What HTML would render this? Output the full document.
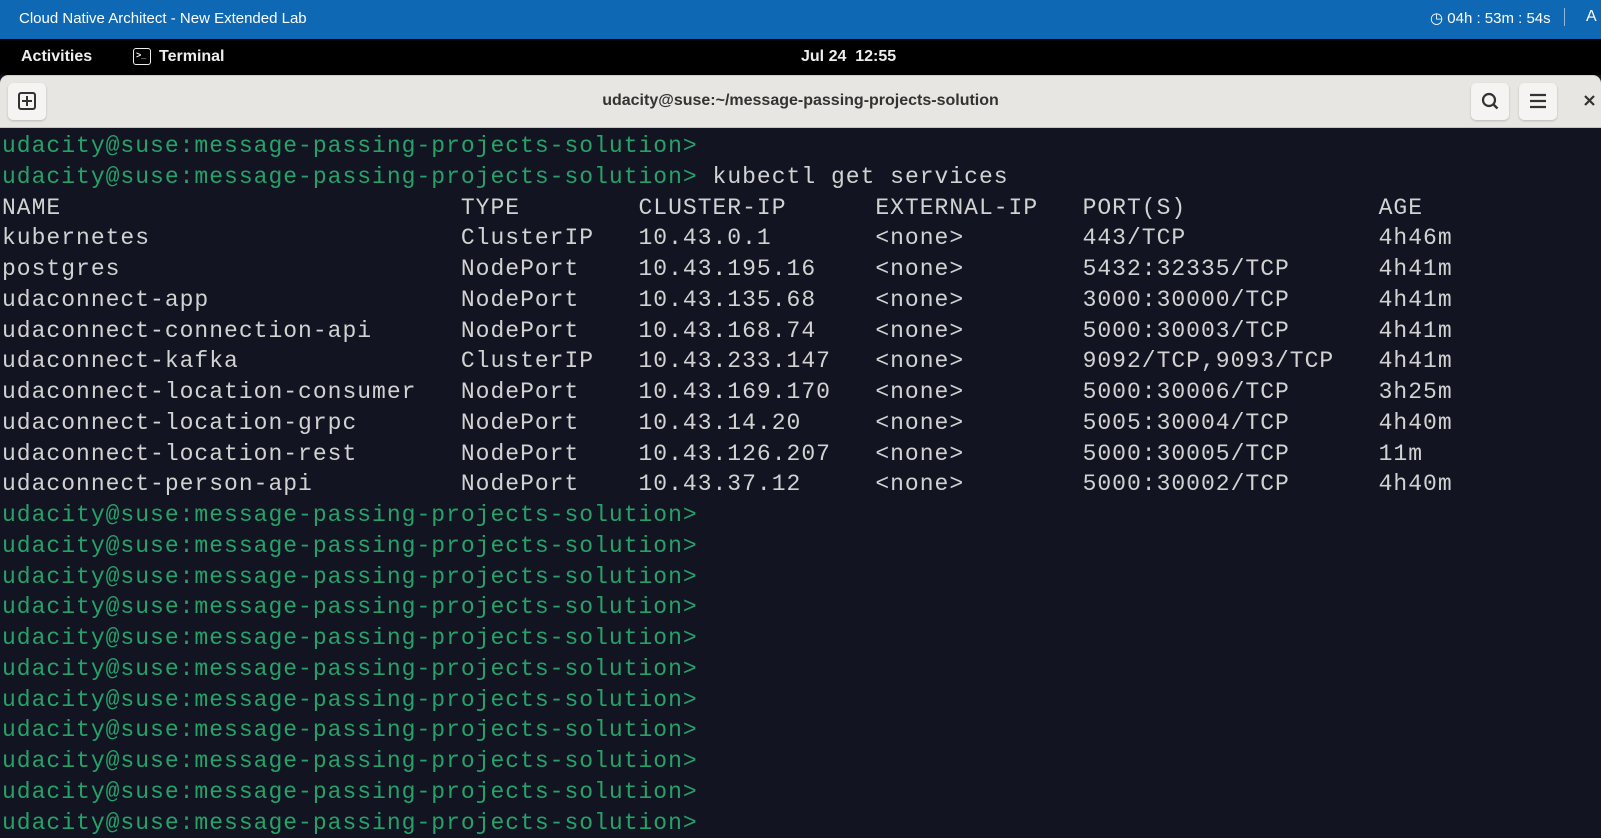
<!DOCTYPE html>
<html><head><meta charset="utf-8"><style>
*{margin:0;padding:0;box-sizing:border-box}
body{width:1601px;height:813px;overflow:hidden;background:#121521;font-family:"Liberation Sans",sans-serif;position:relative}
#top{position:absolute;left:0;top:0;width:1601px;height:39px;background:#0f68b3;color:#fff;font-size:15px}
#top .t{position:absolute;left:19px;top:10px}
#top .c{position:absolute;left:1430px;top:9px;font-size:15px}
#top .sep{position:absolute;left:1564px;top:8px;width:1px;height:18px;background:#8fb8e0}
#top .a{position:absolute;left:1586px;top:8px;font-size:16px}
#gn{position:absolute;left:0;top:39px;width:1601px;height:36px;background:#000;color:#eee;font-size:16px;font-weight:bold}
#gn .act{position:absolute;left:21px;top:9px}
#gn .term{position:absolute;left:159px;top:9px}
#gn .ic{position:absolute;left:133px;top:9px;width:18px;height:17px;border:1.5px solid #eee;border-radius:3px;font-size:9px;line-height:13px;padding-left:2px}
#gn .clk{position:absolute;left:801px;top:9px}
#hb{position:absolute;left:0;top:75px;width:1601px;height:53px;background:#e8e6e2;border-top:1px solid #d0cdc8;border-bottom:1px solid #c8c5c0;border-radius:8px 8px 0 0}
.btn{position:absolute;top:7px;width:38px;height:37px;background:#f5f4f2;border-radius:5px;box-shadow:0 1px 2px rgba(0,0,0,.2)}
#hb .title{position:absolute;left:0;width:1601px;top:16px;text-align:center;font-size:16px;font-weight:bold;color:#333}
pre{position:absolute;left:2px;top:131px;font-family:"Liberation Mono",monospace;font-size:23px;letter-spacing:1px;line-height:30.75px;color:#d2d2d2}
.g{color:#26a269}
</style></head><body>
<div id="top"><span class="t">Cloud Native Architect - New Extended Lab</span><span class="c">&#9719; 04h : 53m : 54s</span><div class="sep"></div><span class="a">A</span></div>
<div id="gn"><span class="act">Activities</span><span class="ic">&gt;_</span><span class="term">Terminal</span><span class="clk">Jul 24&nbsp; 12:55</span></div>
<div id="hb">
<div class="btn" style="left:8px"><svg width="38" height="37"><rect x="11" y="10" width="16" height="16" rx="2" fill="none" stroke="#333" stroke-width="2"/><path d="M19 13v10M14 18h10" stroke="#333" stroke-width="2"/></svg></div>
<div class="title">udacity@suse:~/message-passing-projects-solution</div>
<div class="btn" style="left:1471px"><svg width="38" height="37"><circle cx="18" cy="17" r="6" fill="none" stroke="#333" stroke-width="2.2"/><path d="M22.5 21.5l4 4" stroke="#333" stroke-width="2.4"/></svg></div>
<div class="btn" style="left:1519px"><svg width="38" height="37"><path d="M11 12h16M11 18h16M11 24h16" stroke="#333" stroke-width="2.2"/></svg></div>
<svg style="position:absolute;left:1583px;top:18px" width="14" height="14"><path d="M2 2l9 9M11 2l-9 9" stroke="#333" stroke-width="2.2"/></svg>
</div>
<pre><span class="g">udacity@suse:message-passing-projects-solution&gt;</span>
<span class="g">udacity@suse:message-passing-projects-solution&gt;</span> kubectl get services
NAME                           TYPE        CLUSTER-IP      EXTERNAL-IP   PORT(S)             AGE
kubernetes                     ClusterIP   10.43.0.1       &lt;none&gt;        443/TCP             4h46m
postgres                       NodePort    10.43.195.16    &lt;none&gt;        5432:32335/TCP      4h41m
udaconnect-app                 NodePort    10.43.135.68    &lt;none&gt;        3000:30000/TCP      4h41m
udaconnect-connection-api      NodePort    10.43.168.74    &lt;none&gt;        5000:30003/TCP      4h41m
udaconnect-kafka               ClusterIP   10.43.233.147   &lt;none&gt;        9092/TCP,9093/TCP   4h41m
udaconnect-location-consumer   NodePort    10.43.169.170   &lt;none&gt;        5000:30006/TCP      3h25m
udaconnect-location-grpc       NodePort    10.43.14.20     &lt;none&gt;        5005:30004/TCP      4h40m
udaconnect-location-rest       NodePort    10.43.126.207   &lt;none&gt;        5000:30005/TCP      11m
udaconnect-person-api          NodePort    10.43.37.12     &lt;none&gt;        5000:30002/TCP      4h40m
<span class="g">udacity@suse:message-passing-projects-solution&gt;
udacity@suse:message-passing-projects-solution&gt;
udacity@suse:message-passing-projects-solution&gt;
udacity@suse:message-passing-projects-solution&gt;
udacity@suse:message-passing-projects-solution&gt;
udacity@suse:message-passing-projects-solution&gt;
udacity@suse:message-passing-projects-solution&gt;
udacity@suse:message-passing-projects-solution&gt;
udacity@suse:message-passing-projects-solution&gt;
udacity@suse:message-passing-projects-solution&gt;
udacity@suse:message-passing-projects-solution&gt;</span></pre>
</body></html>
